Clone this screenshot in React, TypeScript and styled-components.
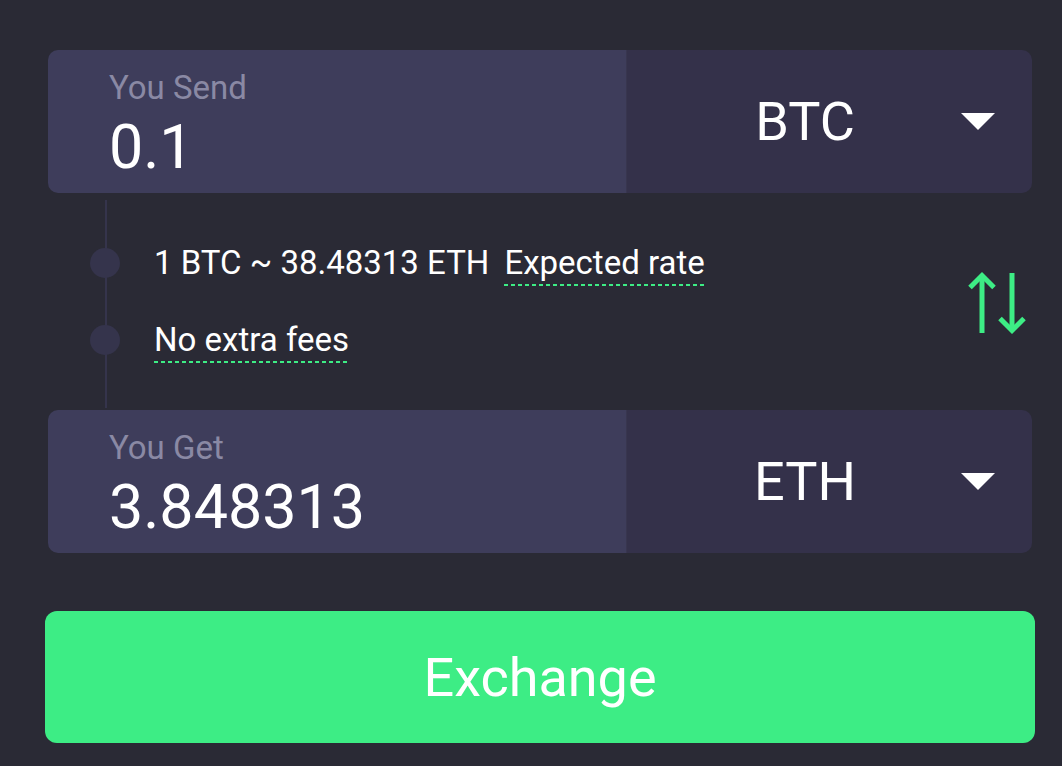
import React from "react"
import styled, { createGlobalStyle } from "styled-components"

const GlobalStyle = createGlobalStyle`
  html, body {
    margin: 0;
    padding: 0;
    background: #2a2a35;
  }
  body {
    font-family: Roboto, "Noto Sans", sans-serif;
    color: #ffffff;
  }
`

type AmountBoxProps = {
  label: string
  amount: string
  currency: string
}

const AmountBox = ({ label, amount, currency }: AmountBoxProps) => (
  <Box>
    <AmountPart>
      <Label>{label}</Label>
      <Amount>{amount}</Amount>
    </AmountPart>
    <CurrencyPart>
      <Currency>{currency}</Currency>
      <Caret />
    </CurrencyPart>
  </Box>
)

const SwapIcon = () => (
  <svg width="66" height="66" viewBox="0 0 66 66" fill="none" stroke="#3ded85" strokeWidth="5">
    <path d="M18 6v57" />
    <path d="M6 17.5 18 5.5l12 12" />
    <path d="M48 3v57" />
    <path d="M36 48.5l12 12 12-12" />
  </svg>
)

export default function App() {
  return (
    <>
      <GlobalStyle />
      <Page>
        <AmountBox label="You Send" amount="0.1" currency="BTC" />
        <Middle>
          <Rows>
            <Row>
              <Dot />
              <RowText>
                1 BTC ~ 38.48313 ETH
                <Term $gap>Expected rate</Term>
              </RowText>
            </Row>
            <Row>
              <Dot />
              <RowText>
                <Term>No extra fees</Term>
              </RowText>
            </Row>
          </Rows>
          <SwapButton aria-label="Swap currencies">
            <SwapIcon />
          </SwapButton>
        </Middle>
        <AmountBox label="You Get" amount="3.848313" currency="ETH" />
        <ExchangeButton>Exchange</ExchangeButton>
      </Page>
    </>
  )
}

const Page = styled.div`
  width: 1062px;
  height: 766px;
  box-sizing: border-box;
  padding: 50px 30px 0 48px;
  overflow: hidden;
`

const Box = styled.div`
  display: flex;
  height: 143px;
  border-radius: 10px;
  overflow: hidden;
`

const AmountPart = styled.div`
  width: 579px;
  box-sizing: border-box;
  padding: 20px 0 0 61px;
  background: #3e3d5b;
  border-right: 1px solid #38364f;
`

const Label = styled.div`
  font-size: 33px;
  line-height: 36px;
  color: #8a89a4;
`

const Amount = styled.div`
  margin-top: 11px;
  font-size: 61px;
  line-height: 60px;
  color: #ffffff;
`

const CurrencyPart = styled.div`
  flex: 1;
  display: flex;
  align-items: center;
  padding: 0 37px 0 22px;
  background: #34314a;
`

const Currency = styled.div`
  flex: 1;
  text-align: center;
  font-size: 54px;
  line-height: 54px;
  color: #ffffff;
`

const Caret = styled.span`
  width: 0;
  height: 0;
  border-left: 17px solid transparent;
  border-right: 17px solid transparent;
  border-top: 17px solid #ffffff;
`

const Middle = styled.div`
  display: flex;
  align-items: center;
  justify-content: space-between;
  height: 217px;
  padding: 0 2px 0 42px;
  background: linear-gradient(#35344c, #35344c) no-repeat 57px 7px / 2px 208px;
`

const Rows = styled.div`
  display: flex;
  flex-direction: column;
  gap: 37px;
  align-self: flex-start;
  padding-top: 50px;
`

const Row = styled.div`
  display: flex;
  align-items: center;
  gap: 34px;
  height: 40px;
`

const Dot = styled.span`
  width: 30px;
  height: 30px;
  border-radius: 50%;
  background: #35344c;
  flex-shrink: 0;
`

const RowText = styled.div`
  margin-top: 4px;
  font-size: 33px;
  line-height: 36px;
  color: #ffffff;
  white-space: nowrap;
`

const Term = styled.span<{ $gap?: boolean }>`
  display: inline-block;
  margin-left: ${(p) => (p.$gap ? "15px" : "0")};
  padding-bottom: 5px;
  line-height: 36px;
  background-image: repeating-linear-gradient(90deg, #3ded85 0 4px, transparent 4px 7px);
  background-repeat: no-repeat;
  background-position: left bottom;
  background-size: 100% 2px;
`

const SwapButton = styled.div`
  display: flex;
  align-items: center;
  justify-content: center;
  margin-top: 2px;
`

const ExchangeButton = styled.button`
  display: block;
  width: 990px;
  height: 132px;
  margin: 58px 0 0 -3px;
  border: none;
  border-radius: 12px;
  background: #3ded85;
  color: #ffffff;
  font-family: Roboto, "Noto Sans", sans-serif;
  font-size: 54px;
  cursor: pointer;
`
